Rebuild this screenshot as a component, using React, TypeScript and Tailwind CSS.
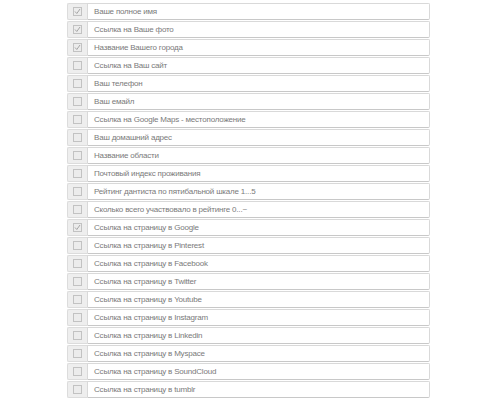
import { useState } from 'react'

const fields = [
  { label: 'Ваше полное имя', on: true },
  { label: 'Ссылка на Ваше фото', on: true },
  { label: 'Название Вашего города', on: true },
  { label: 'Ссылка на Ваш сайт', on: false },
  { label: 'Ваш телефон', on: false },
  { label: 'Ваш емайл', on: false },
  { label: 'Ссылка на Google Maps - местоположение', on: false },
  { label: 'Ваш домашний адрес', on: false },
  { label: 'Название области', on: false },
  { label: 'Почтовый индекс проживания', on: false },
  { label: 'Рейтинг дантиста по пятибальной шкале 1...5', on: false },
  { label: 'Сколько всего участвовало в рейтинге 0...~', on: false },
  { label: 'Ссылка на страницу в Google', on: true },
  { label: 'Ссылка на страницу в Pinterest', on: false },
  { label: 'Ссылка на страницу в Facebook', on: false },
  { label: 'Ссылка на страницу в Twitter', on: false },
  { label: 'Ссылка на страницу в Youtube', on: false },
  { label: 'Ссылка на страницу в Instagram', on: false },
  { label: 'Ссылка на страницу в Linkedin', on: false },
  { label: 'Ссылка на страницу в Myspace', on: false },
  { label: 'Ссылка на страницу в SoundCloud', on: false },
  { label: 'Ссылка на страницу в tumblr', on: false },
]

function Check({ on, toggle }: { on: boolean; toggle: () => void }) {
  return (
    <button
      onClick={toggle}
      className="flex h-[9px] w-[9px] items-center justify-center border border-[#c2c2c2] bg-[#ececec]"
    >
      {on && (
        <svg width="7" height="7" viewBox="0 0 7 7">
          <path d="M1 3.5 L2.8 5.5 L6 1" fill="none" stroke="#a6a6a6" strokeWidth="1" />
        </svg>
      )}
    </button>
  )
}

export default function App() {
  const [checked, setChecked] = useState(fields.map((f) => f.on))

  return (
    <div className="h-[402px] w-[500px] overflow-hidden bg-white pt-[3px] font-['Liberation_Sans',Arial,sans-serif]">
      <div className="ml-[67px] w-[363px]">
        {fields.map((f, i) => (
          <div key={f.label} className="mb-[1px] flex h-[17px]">
            {/* addon */}
            <div className="flex w-[20px] items-center justify-center rounded-l-[2px] border border-r-0 border-[#dcdcdc] bg-[#eeeeee]">
              <Check
                on={checked[i]}
                toggle={() =>
                  setChecked(checked.map((c, j) => (j === i ? !c : c)))
                }
              />
            </div>
            {/* field */}
            <div className="flex flex-1 items-center rounded-r-[2px] border border-[#d9d9d9] border-b-[#c8c8c8] pl-[6px] text-[8px] tracking-[-0.2px] text-[#7a7a7a]">
              {f.label}
            </div>
          </div>
        ))}
      </div>
    </div>
  )
}
